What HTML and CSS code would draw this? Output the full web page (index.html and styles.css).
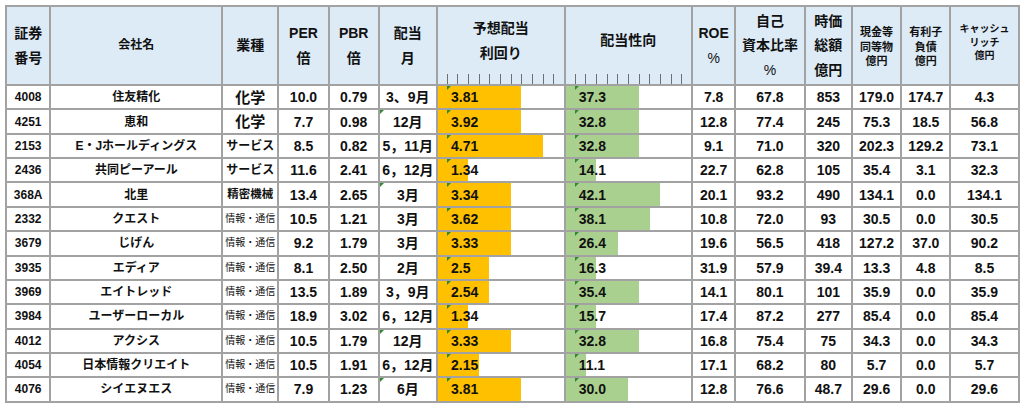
FILE: index.html
```html
<!DOCTYPE html>
<html lang="ja">
<head>
<meta charset="utf-8">
<title>高配当銘柄一覧</title>
<link rel="stylesheet" href="styles.css">
</head>
<body>
<div class="sheet">
  <div class="c h"><span>証券<br>番号</span></div>
  <div class="c h h12"><span>会社名</span></div>
  <div class="c h"><span>業種</span></div>
  <div class="c h"><span>PER<br>倍</span></div>
  <div class="c h"><span>PBR<br>倍</span></div>
  <div class="c h"><span>配当<br>月</span></div>
  <div class="c h ticks"><span>予想配当<br>利回り</span></div>
  <div class="c h ticks"><span>配当性向</span></div>
  <div class="c h"><span>ROE<br><i class="pc">%</i></span></div>
  <div class="c h"><span>自己<br>資本比率<br><i class="pc">%</i></span></div>
  <div class="c h"><span>時価<br>総額<br>億円</span></div>
  <div class="c h hs"><span>現金等<br>同等物<br>億円</span></div>
  <div class="c h hs"><span>有利子<br>負債<br>億円</span></div>
  <div class="c h hx"><span>キャッシュ<br>リッチ<br>億円</span></div>

  <div class="c code">4008</div><div class="c name">住友精化</div><div class="c ind1">化学</div><div class="c">10.0</div><div class="c">0.79</div><div class="c">3、9月</div>
  <div class="c bar y" style="--w:83.3px"><span class="tri"></span>3.81</div><div class="c bar g" style="--w:73px"><span class="tri"></span>37.3</div>
  <div class="c">7.8</div><div class="c">67.8</div><div class="c">853</div><div class="c">179.0</div><div class="c">174.7</div><div class="c">4.3</div>

  <div class="c code">4251</div><div class="c name">恵和</div><div class="c ind1">化学</div><div class="c">7.7</div><div class="c">0.98</div><div class="c">12月<span class="tm"></span></div>
  <div class="c bar y" style="--w:83.3px"><span class="tri"></span>3.92</div><div class="c bar g" style="--w:73px"><span class="tri"></span>32.8</div>
  <div class="c">12.8</div><div class="c">77.4</div><div class="c">245</div><div class="c">75.3</div><div class="c">18.5</div><div class="c">56.8</div>

  <div class="c code">2153</div><div class="c name">E・Jホールディングス</div><div class="c ind2">サービス</div><div class="c">8.5</div><div class="c">0.82</div><div class="c">5，11月</div>
  <div class="c bar y" style="--w:104.7px"><span class="tri"></span>4.71</div><div class="c bar g" style="--w:73px"><span class="tri"></span>32.8</div>
  <div class="c">9.1</div><div class="c">71.0</div><div class="c">320</div><div class="c">202.3</div><div class="c">129.2</div><div class="c">73.1</div>

  <div class="c code">2436</div><div class="c name">共同ピーアール</div><div class="c ind2">サービス</div><div class="c">11.6</div><div class="c">2.41</div><div class="c">6，12月</div>
  <div class="c bar y" style="--w:30px"><span class="tri"></span>1.34</div><div class="c bar g" style="--w:30.3px"><span class="tri"></span>14.1</div>
  <div class="c">22.7</div><div class="c">62.8</div><div class="c">105</div><div class="c">35.4</div><div class="c">3.1</div><div class="c">32.3</div>

  <div class="c code">368A</div><div class="c name">北里</div><div class="c ind3">精密機械</div><div class="c">13.4</div><div class="c">2.65</div><div class="c">3月<span class="tm"></span></div>
  <div class="c bar y" style="--w:72.7px"><span class="tri"></span>3.34</div><div class="c bar g" style="--w:94.3px"><span class="tri"></span>42.1</div>
  <div class="c">20.1</div><div class="c">93.2</div><div class="c">490</div><div class="c">134.1</div><div class="c">0.0</div><div class="c">134.1</div>

  <div class="c code">2332</div><div class="c name">クエスト</div><div class="c ind4">情報・通信</div><div class="c">10.5</div><div class="c">1.21</div><div class="c">3月</div>
  <div class="c bar y" style="--w:72.7px"><span class="tri"></span>3.62</div><div class="c bar g" style="--w:83.7px"><span class="tri"></span>38.1</div>
  <div class="c">10.8</div><div class="c">72.0</div><div class="c">93</div><div class="c">30.5</div><div class="c">0.0</div><div class="c">30.5</div>

  <div class="c code">3679</div><div class="c name">じげん</div><div class="c ind4">情報・通信</div><div class="c">9.2</div><div class="c">1.79</div><div class="c">3月</div>
  <div class="c bar y" style="--w:72.7px"><span class="tri"></span>3.33</div><div class="c bar g" style="--w:51.6px"><span class="tri"></span>26.4</div>
  <div class="c">19.6</div><div class="c">56.5</div><div class="c">418</div><div class="c">127.2</div><div class="c">37.0</div><div class="c">90.2</div>

  <div class="c code">3935</div><div class="c name">エディア</div><div class="c ind4">情報・通信</div><div class="c">8.1</div><div class="c">2.50</div><div class="c">2月</div>
  <div class="c bar y" style="--w:51.3px"><span class="tri"></span>2.5</div><div class="c bar g" style="--w:30.3px"><span class="tri"></span>16.3</div>
  <div class="c">31.9</div><div class="c">57.9</div><div class="c">39.4</div><div class="c">13.3</div><div class="c">4.8</div><div class="c">8.5</div>

  <div class="c code">3969</div><div class="c name">エイトレッド</div><div class="c ind4">情報・通信</div><div class="c">13.5</div><div class="c">1.89</div><div class="c">3，9月</div>
  <div class="c bar y" style="--w:51.3px"><span class="tri"></span>2.54</div><div class="c bar g" style="--w:73px"><span class="tri"></span>35.4</div>
  <div class="c">14.1</div><div class="c">80.1</div><div class="c">101</div><div class="c">35.9</div><div class="c">0.0</div><div class="c">35.9</div>

  <div class="c code">3984</div><div class="c name">ユーザーローカル</div><div class="c ind4">情報・通信</div><div class="c">18.9</div><div class="c">3.02</div><div class="c">6，12月</div>
  <div class="c bar y" style="--w:30px"><span class="tri"></span>1.34</div><div class="c bar g" style="--w:30.3px"><span class="tri"></span>15.7</div>
  <div class="c">17.4</div><div class="c">87.2</div><div class="c">277</div><div class="c">85.4</div><div class="c">0.0</div><div class="c">85.4</div>

  <div class="c code">4012</div><div class="c name">アクシス</div><div class="c ind4">情報・通信</div><div class="c">10.5</div><div class="c">1.79</div><div class="c">12月<span class="tm"></span></div>
  <div class="c bar y" style="--w:72.7px"><span class="tri"></span>3.33</div><div class="c bar g" style="--w:73px"><span class="tri"></span>32.8</div>
  <div class="c">16.8</div><div class="c">75.4</div><div class="c">75</div><div class="c">34.3</div><div class="c">0.0</div><div class="c">34.3</div>

  <div class="c code">4054</div><div class="c name">日本情報クリエイト</div><div class="c ind4">情報・通信</div><div class="c">10.5</div><div class="c">1.91</div><div class="c">6，12月</div>
  <div class="c bar y" style="--w:40.7px"><span class="tri"></span>2.15</div><div class="c bar g" style="--w:19.6px"><span class="tri"></span>11.1</div>
  <div class="c">17.1</div><div class="c">68.2</div><div class="c">80</div><div class="c">5.7</div><div class="c">0.0</div><div class="c">5.7</div>

  <div class="c code">4076</div><div class="c name">シイエヌエス</div><div class="c ind4">情報・通信</div><div class="c">7.9</div><div class="c">1.23</div><div class="c">6月<span class="tm"></span></div>
  <div class="c bar y" style="--w:83.3px"><span class="tri"></span>3.81</div><div class="c bar g" style="--w:62.3px"><span class="tri"></span>30.0</div>
  <div class="c">12.8</div><div class="c">76.6</div><div class="c">48.7</div><div class="c">29.6</div><div class="c">0.0</div><div class="c">29.6</div>
</div>
</body>
</html>
```
FILE: styles.css
```css
html, body {
  margin: 0;
  background: #ffffff;
}
body {
  padding: 5px;
  font-family: "Liberation Sans", "Noto Sans CJK JP", sans-serif;
  color: #111111;
}
.sheet {
  display: grid;
  grid-template-columns: 42.3px 170px 54px 48.4px 48px 56.3px 125.7px 125.3px 41.3px 67.4px 45.3px 47.3px 47px 66.4px;
  grid-template-rows: 77px repeat(13, 22.36px);
  gap: 2px;
  padding: 2px;
  background: #a2a2a2;
  width: max-content;
}
.c {
  background: #ffffff;
  display: flex;
  align-items: center;
  justify-content: center;
  font-weight: bold;
  font-size: 14px;
  line-height: 1;
  white-space: nowrap;
  position: relative;
  overflow: hidden;
}
.h {
  background: #ddebf7;
  text-align: center;
  line-height: 24.5px;
}
.h .pc {
  font-style: normal;
  font-weight: normal;
}
.h12 {
  font-size: 12px;
}
.hs {
  font-size: 11px;
  line-height: 14.5px;
  padding-top: 3px;
}
.hx {
  font-size: 10px;
  line-height: 13.5px;
  padding-bottom: 6px;
}
.ticks {
  padding-bottom: 10px;
  background-image: repeating-linear-gradient(90deg, transparent 0 8.7px, #6f6f6f 8.7px 9.7px, transparent 9.7px 10.667px);
  background-size: 100% 10px;
  background-position: left bottom;
  background-repeat: no-repeat;
}
.code {
  font-size: 12px;
}
.name {
  font-size: 12px;
}
.ind1 {
  font-size: 15px;
}
.ind2 {
  font-size: 12px;
}
.ind3 {
  font-size: 11.5px;
}
.ind4 {
  font-size: 10px;
  font-weight: normal;
}
.bar {
  justify-content: flex-start;
  padding-left: 13px;
}
.y {
  background: linear-gradient(90deg, #ffc000 0 var(--w), #ffffff var(--w));
}
.g {
  background: linear-gradient(90deg, #a9d08e 0 var(--w), #ffffff var(--w));
}
.tri,
.tm {
  position: absolute;
  top: 0;
  width: 0;
  height: 0;
  border-top: 4px solid #2f8a2f;
  border-right: 4px solid transparent;
}
.tri {
  left: 9.5px;
}
.tm {
  left: 0;
}
```
